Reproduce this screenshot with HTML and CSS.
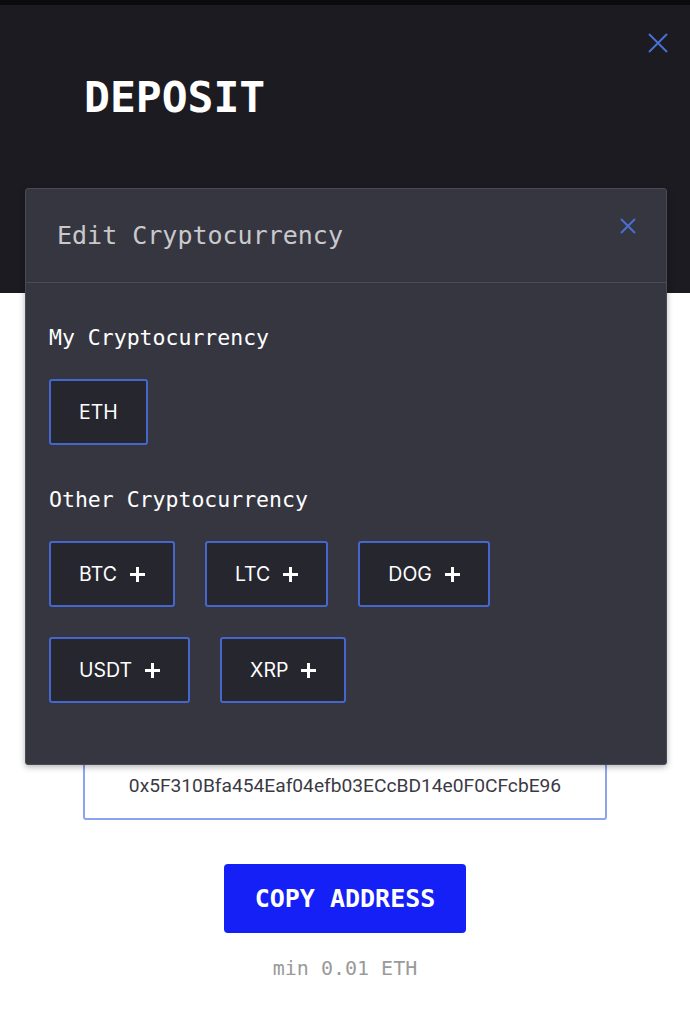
FILE: index.html
```html
<!DOCTYPE html>
<html lang="en">
<head>
    <meta charset="UTF-8">
    <meta name="viewport" content="width=device-width, initial-scale=1.0">
    <title>Deposit</title>
    <link rel="stylesheet" href="styles.css">
</head>
<body>

    <header class="deposit-header">
        <h1>DEPOSIT</h1>
        <button class="close-btn page-close" aria-label="Close">
            <svg viewBox="0 0 20 20" width="20" height="20"><path d="M1 1 L19 19 M19 1 L1 19"/></svg>
        </button>
    </header>

    <main class="deposit-body">
        <div class="address-box">0x5F310Bfa454Eaf04efb03ECcBD14e0F0CFcbE96</div>
        <button class="copy-btn">COPY ADDRESS</button>
        <p class="min-note">min 0.01 ETH</p>
    </main>

    <div class="modal">
        <div class="modal-header">
            <h2>Edit Cryptocurrency</h2>
            <button class="close-btn modal-close" aria-label="Close">
                <svg viewBox="0 0 16 16" width="16" height="16"><path d="M1 1 L15 15 M15 1 L1 15"/></svg>
            </button>
        </div>
        <div class="modal-body">
            <h3>My Cryptocurrency</h3>
            <div class="coin-list">
                <button class="coin">ETH</button>
            </div>

            <h3 class="other-title">Other Cryptocurrency</h3>
            <div class="coin-list">
                <button class="coin">BTC <span class="plus"></span></button>
                <button class="coin">LTC <span class="plus"></span></button>
                <button class="coin">DOG <span class="plus"></span></button>
                <button class="coin">USDT <span class="plus"></span></button>
                <button class="coin">XRP <span class="plus"></span></button>
            </div>
        </div>
    </div>

</body>
</html>
```

FILE: styles.css
```css
:root {
    --header-bg: #1b1b21;
    --modal-bg: #363641;
    --coin-bg: #26262f;
    --accent: #4a6fd4;
    --mono: "DejaVu Sans Mono", "Liberation Mono", monospace;
}
body {
    margin: 0;
    background-color: #fff;
    font-family: var(--mono);
    position: relative;
    min-height: 1024px;
}
button {
    font: inherit;
    cursor: pointer;
}

/* page header */
.deposit-header {
    background-color: var(--header-bg);
    border-top: 5px solid #0b0b0d;
    height: 293px;
    box-sizing: border-box;
    padding: 66px 0 0 84px;
    position: relative;
}
.deposit-header h1 {
    margin: 0;
    color: #fff;
    font-size: 43px;
    line-height: 52px;
    font-weight: bold;
}
.close-btn {
    background: none;
    border: none;
    padding: 0;
    display: block;
}
.close-btn svg path {
    stroke: var(--accent);
    stroke-width: 2;
    fill: none;
}
.page-close {
    position: absolute;
    top: 28px;
    right: 22px;
}

/* deposit content */
.deposit-body {
    display: flex;
    flex-direction: column;
    align-items: center;
    padding-top: 457px;
}
.address-box {
    width: 524px;
    height: 70px;
    box-sizing: border-box;
    border: 2px solid #8aa4ef;
    border-radius: 3px;
    display: flex;
    align-items: center;
    justify-content: center;
    font-family: Roboto, "Liberation Sans", sans-serif;
    font-size: 19.2px;
    color: #3a3a45;
}
.copy-btn {
    margin-top: 44px;
    width: 242px;
    height: 69px;
    border: none;
    border-radius: 4px;
    background-color: #1420f5;
    color: #fff;
    font-size: 25px;
    font-weight: bold;
}
.min-note {
    margin: 23px 0 0;
    color: #9a9a9a;
    font-size: 20px;
    line-height: 24px;
}

/* modal */
.modal {
    position: absolute;
    top: 188px;
    left: 25px;
    width: 642px;
    box-sizing: border-box;
    background-color: var(--modal-bg);
    border: 1px solid #4a4a56;
    border-radius: 3px;
    box-shadow: 0 2px 6px rgba(0, 0, 0, 0.3);
}
.modal-header {
    display: flex;
    justify-content: space-between;
    align-items: flex-start;
    padding: 31px 30px 31px 31px;
    border-bottom: 1px solid #4b4b58;
}
.modal-header h2 {
    margin: 0;
    font-size: 25px;
    line-height: 31px;
    font-weight: normal;
    color: #c9c9cc;
}
.modal-close {
    margin-top: -2px;
}
.modal-body {
    padding: 42px 23px 61px;
}
.modal-body h3 {
    margin: 0;
    font-size: 21.5px;
    line-height: 26px;
    font-weight: normal;
    color: #fff;
}
.other-title {
    margin-top: 42px !important;
}
.coin-list {
    display: flex;
    flex-wrap: wrap;
    gap: 30px;
    margin-top: 28px;
    max-width: 480px;
}
.coin {
    height: 66px;
    padding: 0 28px;
    display: flex;
    align-items: center;
    gap: 13px;
    background-color: var(--coin-bg);
    border: 2px solid #4566cc;
    border-radius: 3px;
    color: #fff;
    font-family: Inter, "Liberation Sans", sans-serif;
    font-size: 19.5px;
}
.plus {
    width: 15px;
    height: 15px;
    position: relative;
}
.plus::before, .plus::after {
    content: "";
    position: absolute;
    background-color: #fff;
}
.plus::before {
    left: 0;
    top: 6px;
    width: 15px;
    height: 3px;
}
.plus::after {
    left: 6px;
    top: 0;
    width: 3px;
    height: 15px;
}
```
